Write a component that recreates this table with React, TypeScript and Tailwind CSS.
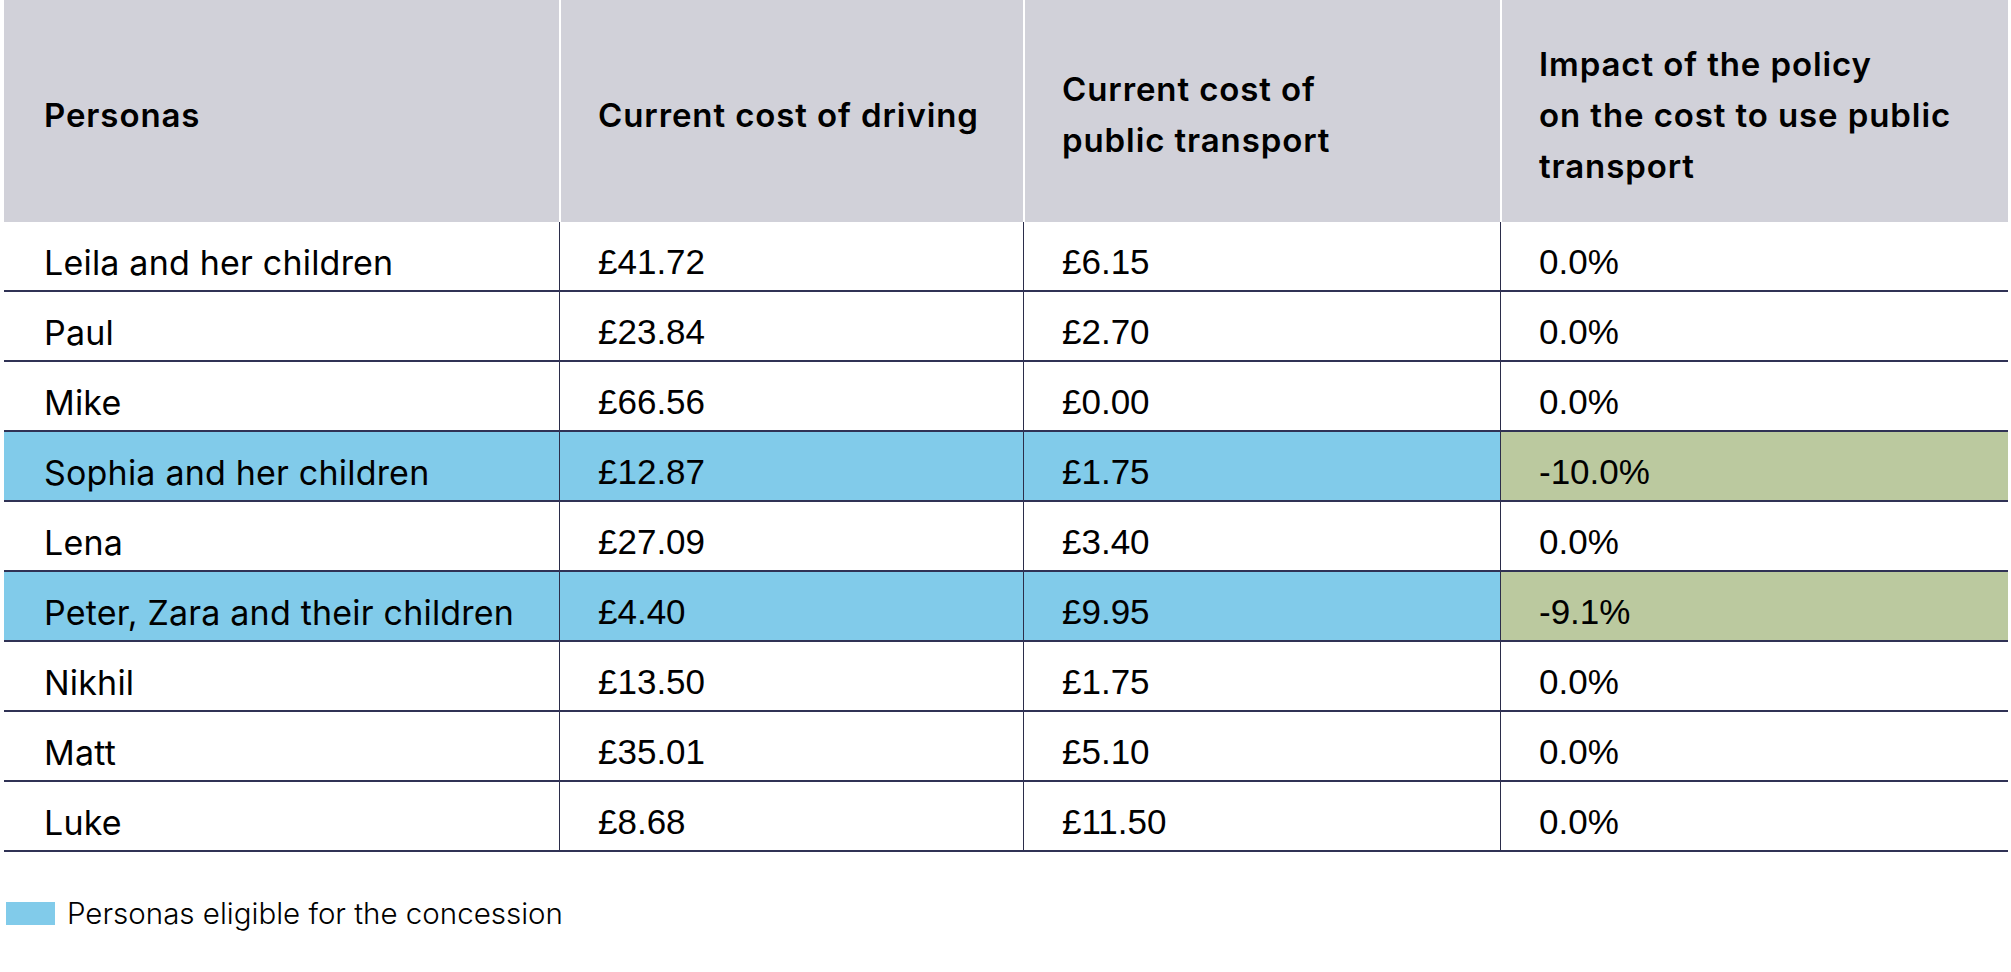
const rows = [
  { name: "Leila and her children", drive: "£41.72", pt: "£6.15", impact: "0.0%", eligible: false },
  { name: "Paul", drive: "£23.84", pt: "£2.70", impact: "0.0%", eligible: false },
  { name: "Mike", drive: "£66.56", pt: "£0.00", impact: "0.0%", eligible: false },
  { name: "Sophia and her children", drive: "£12.87", pt: "£1.75", impact: "-10.0%", eligible: true },
  { name: "Lena", drive: "£27.09", pt: "£3.40", impact: "0.0%", eligible: false },
  { name: "Peter, Zara and their children", drive: "£4.40", pt: "£9.95", impact: "-9.1%", eligible: true },
  { name: "Nikhil", drive: "£13.50", pt: "£1.75", impact: "0.0%", eligible: false },
  { name: "Matt", drive: "£35.01", pt: "£5.10", impact: "0.0%", eligible: false },
  { name: "Luke", drive: "£8.68", pt: "£11.50", impact: "0.0%", eligible: false },
];

const grid = "grid grid-cols-[555px_464px_477px_1fr]";
const grotesk = "font-['Inter','Noto_Sans',sans-serif]";
const helv = "font-['Liberation_Sans','Arial',sans-serif]";

export default function App() {
  return (
    <div className="min-h-screen bg-white text-black pl-[4px] pr-[3px]">
      {/* header */}
      <div className={`${grid} h-[222px] ${grotesk} font-semibold text-[33px] leading-[51px] tracking-[0.9px]`}>
        <div className="bg-[#d1d1d9] flex items-center pl-10 pt-2">Personas</div>
        <div className="bg-[#d1d1d9] flex items-center pl-[37px] pt-2 border-l-2 border-white">Current cost of driving</div>
        <div className="bg-[#d1d1d9] flex items-center pl-[37px] pt-2 border-l-2 border-white">
          <div>
            Current cost of
            <br />
            public transport
          </div>
        </div>
        <div className="bg-[#d1d1d9] flex items-center pl-[37px] pt-2 border-l-2 border-white">
          <div>
            Impact of the policy
            <br />
            on the cost to use public
            <br />
            transport
          </div>
        </div>
      </div>

      {rows.map((r) => (
        <div key={r.name} className={`${grid} h-[70px] border-b-2 border-[#303255] ${r.eligible ? "bg-[#81cbea]" : "bg-white"}`}>
          <div className={`flex items-center pl-10 pt-3 ${grotesk} text-[34px] tracking-[0.2px]`}>{r.name}</div>
          <div className={`flex items-center pl-[38px] pt-3 border-l border-[#2b2d4a] ${helv} text-[35px]`}>{r.drive}</div>
          <div className={`flex items-center pl-[38px] pt-3 border-l border-[#2b2d4a] ${helv} text-[35px]`}>{r.pt}</div>
          <div className={`flex items-center pl-[38px] pt-3 border-l border-[#2b2d4a] ${helv} text-[35px] ${r.eligible ? "bg-[#bbc99f]" : "bg-white"}`}>
            {r.impact}
          </div>
        </div>
      ))}

      <div className="flex items-center mt-[47px] ml-[2px] gap-[12px]">
        <div className="w-[49px] h-[23px] bg-[#81cbea]" />
        <span className={`${grotesk} font-light text-[29.5px] leading-none`}>Personas eligible for the concession</span>
      </div>
    </div>
  );
}
